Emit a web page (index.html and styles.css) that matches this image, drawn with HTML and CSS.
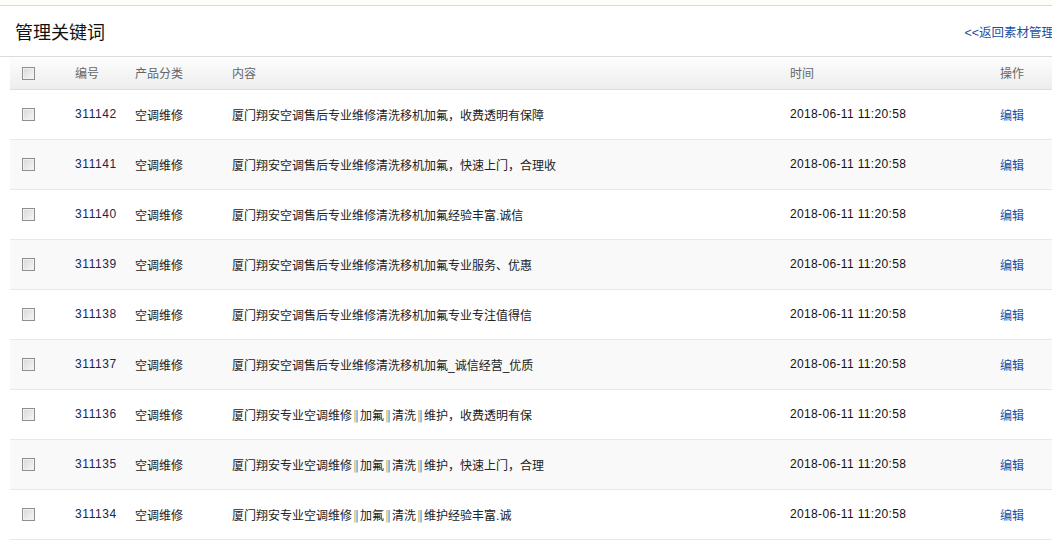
FILE: index.html
```html
<!DOCTYPE html>
<html lang="zh-CN">
<head>
  <meta charset="UTF-8" />
  <meta name="viewport" content="width=device-width, initial-scale=1.0"/>
  <title>管理关键词</title>
  <link rel="stylesheet" href="styles.css">
</head>
<body>
  <div class="page">
    <div class="top-strip"></div>
    <div class="title-bar">
      <h1 class="title">管理关键词</h1>
      <a class="back" href="#">&lt;&lt;返回素材管理</a>
    </div>
    <table class="list">
      <thead>
        <tr>
          <th class="c-check"><input type="checkbox"></th>
          <th class="c-id">编号</th>
          <th class="c-cat">产品分类</th>
          <th class="c-text">内容</th>
          <th class="c-time">时间</th>
          <th class="c-op">操作</th>
        </tr>
      </thead>
      <tbody>
        <tr>
          <td class="c-check"><input type="checkbox"></td>
          <td class="num">311142</td>
          <td>空调维修</td>
          <td>厦门翔安空调售后专业维修清洗移机加氟，收费透明有保障</td>
          <td class="time">2018-06-11 11:20:58</td>
          <td><a href="#">编辑</a></td>
        </tr>
        <tr>
          <td class="c-check"><input type="checkbox"></td>
          <td class="num">311141</td>
          <td>空调维修</td>
          <td>厦门翔安空调售后专业维修清洗移机加氟，快速上门，合理收</td>
          <td class="time">2018-06-11 11:20:58</td>
          <td><a href="#">编辑</a></td>
        </tr>
        <tr>
          <td class="c-check"><input type="checkbox"></td>
          <td class="num">311140</td>
          <td>空调维修</td>
          <td>厦门翔安空调售后专业维修清洗移机加氟经验丰富.诚信</td>
          <td class="time">2018-06-11 11:20:58</td>
          <td><a href="#">编辑</a></td>
        </tr>
        <tr>
          <td class="c-check"><input type="checkbox"></td>
          <td class="num">311139</td>
          <td>空调维修</td>
          <td>厦门翔安空调售后专业维修清洗移机加氟专业服务、优惠</td>
          <td class="time">2018-06-11 11:20:58</td>
          <td><a href="#">编辑</a></td>
        </tr>
        <tr>
          <td class="c-check"><input type="checkbox"></td>
          <td class="num">311138</td>
          <td>空调维修</td>
          <td>厦门翔安空调售后专业维修清洗移机加氟专业专注值得信</td>
          <td class="time">2018-06-11 11:20:58</td>
          <td><a href="#">编辑</a></td>
        </tr>
        <tr>
          <td class="c-check"><input type="checkbox"></td>
          <td class="num">311137</td>
          <td>空调维修</td>
          <td>厦门翔安空调售后专业维修清洗移机加氟_诚信经营_优质</td>
          <td class="time">2018-06-11 11:20:58</td>
          <td><a href="#">编辑</a></td>
        </tr>
        <tr>
          <td class="c-check"><input type="checkbox"></td>
          <td class="num">311136</td>
          <td>空调维修</td>
          <td>厦门翔安专业空调维修<span class="sep">‖</span>加氟<span class="sep">‖</span>清洗<span class="sep">‖</span>维护，收费透明有保</td>
          <td class="time">2018-06-11 11:20:58</td>
          <td><a href="#">编辑</a></td>
        </tr>
        <tr>
          <td class="c-check"><input type="checkbox"></td>
          <td class="num">311135</td>
          <td>空调维修</td>
          <td>厦门翔安专业空调维修<span class="sep">‖</span>加氟<span class="sep">‖</span>清洗<span class="sep">‖</span>维护，快速上门，合理</td>
          <td class="time">2018-06-11 11:20:58</td>
          <td><a href="#">编辑</a></td>
        </tr>
        <tr>
          <td class="c-check"><input type="checkbox"></td>
          <td class="num">311134</td>
          <td>空调维修</td>
          <td>厦门翔安专业空调维修<span class="sep">‖</span>加氟<span class="sep">‖</span>清洗<span class="sep">‖</span>维护经验丰富.诚</td>
          <td class="time">2018-06-11 11:20:58</td>
          <td><a href="#">编辑</a></td>
        </tr>
      </tbody>
    </table>
  </div>
</body>
</html>
```

FILE: styles.css
```css
* {
  box-sizing: border-box;
}
body {
  margin: 0;
  background: #fff;
  font-family: Arial, "Liberation Sans", "Noto Sans CJK SC", sans-serif;
  font-size: 12px;
  color: #222;
  overflow: hidden;
}
.page {
  width: 1062px;
}
.top-strip {
  height: 6px;
  background: #fefef9;
  border-bottom: 1px solid #d9d9d9;
}
.title-bar {
  height: 51px;
  display: flex;
  align-items: center;
  justify-content: space-between;
  padding: 0 8px 0 15px;
  border-bottom: 1px solid #dcdcdc;
}
.title {
  margin: 0;
  font-size: 18px;
  font-weight: normal;
  color: #111;
  font-family: "Noto Sans CJK SC", sans-serif;
}
.back {
  color: #1a4f9f;
  text-decoration: none;
  font-size: 12.5px;
  margin-top: 1px;
}
.list {
  margin-left: 10px;
  width: 1052px;
  border-collapse: collapse;
  table-layout: fixed;
}
.list th,
.list td {
  padding: 0 0 0 10px;
  text-align: left;
  vertical-align: middle;
  white-space: nowrap;
  overflow: hidden;
}
.list th {
  height: 32px;
  font-weight: normal;
  color: #666;
  background: linear-gradient(#fdfdfd, #ededed);
  border-bottom: 1px solid #dedede;
}
.list td {
  height: 50px;
  border-bottom: 1px solid #e8e8e8;
}
.list tbody tr:nth-child(even) td {
  background: #f9f9f9;
}
.list .c-check {
  width: 55px;
  padding-left: 12px;
}
.list .c-id {
  width: 60px;
}
.list .c-cat {
  width: 97px;
}
.list .c-text {
  width: 558px;
}
.list .c-time {
  width: 210px;
}
.num {
  color: #1d2350;
  letter-spacing: 0.6px;
}
.time {
  color: #111;
  letter-spacing: 0.35px;
}
.sep {
  display: inline-block;
  width: 8px;
  text-align: center;
  font-family: "DejaVu Sans", sans-serif;
  font-size: 13px;
  color: transparent;
  background: linear-gradient(90deg, #e2a62c 50%, #2f86d6 50%);
  -webkit-background-clip: text;
  background-clip: text;
}
.list a {
  color: #1a4f9f;
  text-decoration: none;
}
input[type="checkbox"] {
  -webkit-appearance: none;
  appearance: none;
  margin: 0;
  width: 13px;
  height: 13px;
  vertical-align: middle;
  border: 1px solid #8f8f8f;
  background: linear-gradient(135deg, #d8d8d8, #f7f7f7);
  box-shadow: inset 0 0 0 1px #f0f0f0;
}
```
